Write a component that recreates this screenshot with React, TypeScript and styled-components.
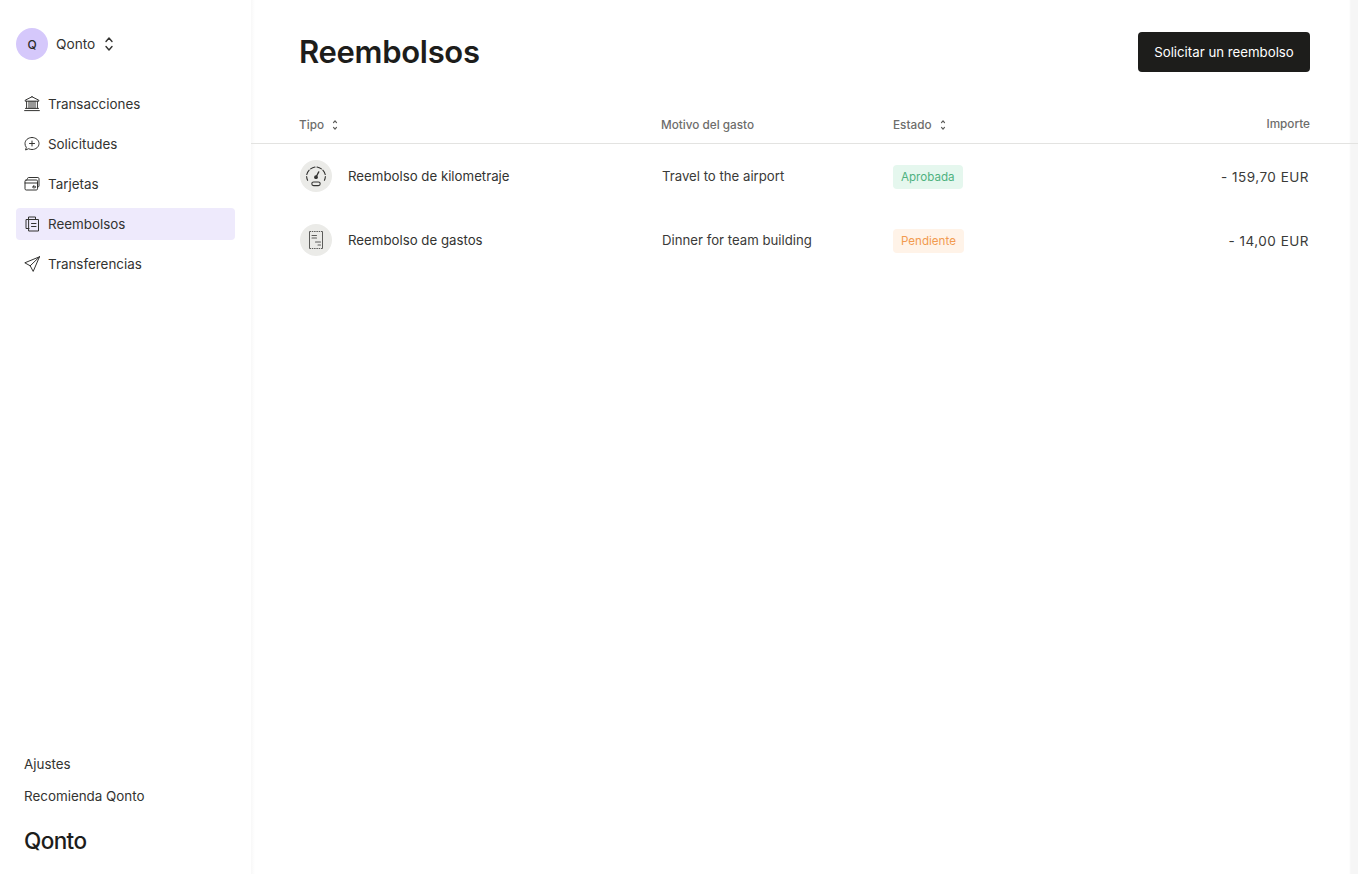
import React from 'react'
import styled, { createGlobalStyle } from 'styled-components'

const Global = createGlobalStyle`
  * { box-sizing: border-box; }
  html, body { margin: 0; height: 100%; background: #fff; }
  body { font-family: Inter, "Liberation Sans", sans-serif; color: #1d1d1b; }
  #root { height: 100%; }
`

const Page = styled.div`
  display: flex;
  height: 874px;
  overflow: hidden;
`

const Sidebar = styled.aside`
  width: 251px;
  flex: none;
  display: flex;
  flex-direction: column;
  padding: 28px 16px 19px;
`

const Org = styled.div`
  display: flex;
  align-items: center;
  height: 32px;
  margin-bottom: 28px;
`

const Avatar = styled.div`
  width: 32px;
  height: 32px;
  border-radius: 50%;
  background: #d5c8fb;
  display: flex;
  align-items: center;
  justify-content: center;
  font-size: 12px;
  font-weight: 500;
  color: #2b2b29;
  margin-right: 8px;
`

const OrgName = styled.span`
  font-size: 13.7px;
  color: #333331;
  margin-right: 6px;
`

const Nav = styled.nav`
  display: flex;
  flex-direction: column;
  gap: 8px;
`

const NavItem = styled.a<{ $active?: boolean }>`
  display: flex;
  align-items: center;
  gap: 8px;
  height: 32px;
  padding: 0 8px 1px;
  border-radius: 4px;
  font-size: 13.4px;
  color: #333331;
  background: ${(p) => (p.$active ? '#eeeafc' : 'transparent')};
`

const Footer = styled.div`
  margin-top: auto;
  padding-left: 8px;
  display: flex;
  flex-direction: column;
`

const FooterLink = styled.a`
  height: 32px;
  line-height: 31px;
  font-size: 13.4px;
  color: #333331;
`

const Logo = styled.div`
  margin-top: 14px;
  font-size: 22.500px;
  line-height: 28px;
  font-weight: 500;
  letter-spacing: -0.6px;
  color: #1d1d1b;
`

const Main = styled.main`
  flex: 1;
  min-width: 0;
  background:
    linear-gradient(to right, #f8f8f8, #ffffff 4px, #ffffff calc(100% - 9px), #f6f6f6 calc(100% - 7px));
`

const Header = styled.header`
  display: flex;
  align-items: center;
  justify-content: space-between;
  height: 104px;
  padding: 0 48px;
`

const Title = styled.h1`
  margin: 0 0 2px;
  font-size: 31px;
  font-weight: 600;
  letter-spacing: -0.3px;
  color: #1d1d1b;
`

const Button = styled.button`
  width: 172px;
  height: 40px;
  border: 0;
  border-radius: 4px;
  background: #1d1d1b;
  color: #fff;
  font: 400 13.250px Inter, "Liberation Sans", sans-serif;
`

const Row = styled.div`
  display: grid;
  grid-template-columns: 362px 232px 1fr auto;
  align-items: center;
  padding: 0 48px;
`

const HeadRow = styled(Row)`
  height: 40px;
  padding-top: 2px;
  border-bottom: 1px solid #e3e3e1;
`

const BodyRow = styled(Row)`
  height: 64px;
`

const HeadCell = styled.div`
  display: flex;
  align-items: center;
  gap: 5px;
  font-size: 11.750px;
  font-weight: 500;
  color: #6d6d6b;
`

const ImportHead = styled(HeadCell)`
  margin-top: -2px;
`

const TypeCell = styled.div`
  display: flex;
  align-items: center;
  gap: 16px;
  font-size: 13.250px;
  color: #333331;
  padding-left: 1px;
`

const IconCircle = styled.span`
  width: 32px;
  height: 32px;
  border-radius: 50%;
  background: #ebebe8;
  display: flex;
  align-items: center;
  justify-content: center;
`

const Cell = styled.div`
  font-size: 13.200px;
  color: #3a3a38;
  padding-left: 1px;
`

const BadgeCell = styled.div`
  display: flex;
  align-items: center;
  padding-top: 1px;
`

const Badge = styled.span<{ $tone: 'green' | 'orange' }>`
  height: 24px;
  line-height: 24px;
  padding: 0 8px;
  border-radius: 4px;
  font-size: 11.600px;
  background: ${(p) => (p.$tone === 'green' ? '#e5f7ee' : '#fff3e8')};
  color: ${(p) => (p.$tone === 'green' ? '#4fb27f' : '#f29b50')};
`

const Amount = styled.div`
  font-size: 13.500px;
  letter-spacing: 0.5px;
  color: #3a3a38;
  text-align: right;
  padding: 1px 1px 0 0;
`

const Glyph = styled.svg.attrs<{ $size?: number; viewBox?: string; strokeWidth?: number }>((p) => ({
  viewBox: p.viewBox ?? '0 0 16 16',
  fill: 'none',
  stroke: 'currentColor',
  strokeWidth: p.strokeWidth ?? 1,
  strokeLinecap: 'round',
  strokeLinejoin: 'round',
}))<{ $size?: number; $muted?: boolean }>`
  width: ${(p) => p.$size ?? 16}px;
  height: ${(p) => p.$size ?? 16}px;
  flex: none;
  color: ${(p) => (p.$muted ? '#5c5c5a' : '#333331')};
`

const Updown = () => (
  <Glyph strokeWidth={1.400}>
    <path d="M5 5.500 8 2l3 3.500M5 10.500 8 14l3-3.500" />
  </Glyph>
)

const SortIcon = () => (
  <Glyph $size={12} $muted strokeWidth={1.200} viewBox="0 0 12 12">
    <path d="M4.500 3.600 6 1.800l1.500 1.800M4.500 8.400 6 10.200l1.500-1.800" />
  </Glyph>
)

const BankIcon = () => (
  <Glyph>
    <path d="M8 .8 1.200 4.200v1h13.600v-1L8 .8ZM2.600 5.200v7M5 5.200v7M7 5.200v7M9 5.200v7M11 5.200v7M13.400 5.200v7M1.500 12.400h13M.6 14.600h14.800" />
  </Glyph>
)

const RequestIcon = () => (
  <Glyph>
    <path d="M8 1.500c-4 0-7 2.700-7 6.200 0 1.400.5 2.600 1.300 3.600L1.600 14l3-1.300c1 .5 2.100.8 3.400.8 3.900 0 7-2.600 7-6 0-3.400-3.100-6-7-6Z" />
    <path d="M8 5v5M5.500 7.500h5" />
  </Glyph>
)

const CardIcon = () => (
  <Glyph>
    <path d="M3.500 3V2.600c0-.6.5-1.100 1.100-1.100h9.300c.6 0 1.100.5 1.100 1.100v7.300c0 .6-.5 1.100-1.100 1.100h-.4" />
    <rect x="1" y="4" width="12.500" height="10" rx="1.200" />
    <path d="M1 7h12.500" />
    <rect x="8.600" y="10.200" width="3" height="1.600" rx=".8" />
  </Glyph>
)

const ReceiptIcon = () => (
  <Glyph>
    <path d="M4.500 3.500V1h7v2.500M5 12.500H2v-9h2.500" />
    <path d="M5 3.500h9.500v11.500H5z" />
    <path d="M7.500 7.500h4.500M7.500 10.500h4.500" />
  </Glyph>
)

const SendIcon = () => (
  <Glyph>
    <path d="M15.500.8.800 6.800l5.400 3 3 5.600 6.300-14.600ZM6.200 9.800 15.500.8" />
  </Glyph>
)

const GaugeIcon = () => (
  <Glyph $size={24} viewBox="0 0 20 20" strokeWidth={0.900}>
    <path d="M3 13.600a8 8 0 0 1-.8-3.100M2.300 8.800a8 8 0 0 1 2-3.700M5.500 4.100a8 8 0 0 1 3.700-1.600M10.800 2.500a8 8 0 0 1 3.700 1.600M15.700 5.100a8 8 0 0 1 2 3.700M17.800 10.500a8 8 0 0 1-.8 3.100" />
    <path d="m12.300 6.600-1.900 3.600" strokeWidth={1.100} />
    <circle cx="10" cy="11" r="1.100" fill="currentColor" />
    <rect x="6.500" y="15" width="7" height="3" rx="1.500" />
  </Glyph>
)

const ExpenseIcon = () => (
  <Glyph $size={20} $muted viewBox="0 0 20 20">
    <path d="M3.500 1.500v17M16.500 1.500v17" strokeLinecap="butt" />
    <path d="M3.500 1.500h13M3.500 18.500h13" strokeLinecap="butt" strokeDasharray="1.500 .8" />
    <path d="M6 5.500h4.500M6 8h4.500M9.500 12h5M12 15h2.500" strokeWidth={1.100} />
  </Glyph>
)

const App = () => (
  <Page>
    <Global />
    <Sidebar>
      <Org>
        <Avatar>Q</Avatar>
        <OrgName>Qonto</OrgName>
        <Updown />
      </Org>
      <Nav>
        <NavItem><BankIcon />Transacciones</NavItem>
        <NavItem><RequestIcon />Solicitudes</NavItem>
        <NavItem><CardIcon />Tarjetas</NavItem>
        <NavItem $active><ReceiptIcon />Reembolsos</NavItem>
        <NavItem><SendIcon />Transferencias</NavItem>
      </Nav>
      <Footer>
        <FooterLink>Ajustes</FooterLink>
        <FooterLink>Recomienda Qonto</FooterLink>
        <Logo>Qonto</Logo>
      </Footer>
    </Sidebar>
    <Main>
      <Header>
        <Title>Reembolsos</Title>
        <Button>Solicitar un reembolso</Button>
      </Header>
      <HeadRow>
        <HeadCell>Tipo <SortIcon /></HeadCell>
        <HeadCell>Motivo del gasto</HeadCell>
        <HeadCell>Estado <SortIcon /></HeadCell>
        <ImportHead>Importe</ImportHead>
      </HeadRow>
      <BodyRow>
        <TypeCell><IconCircle><GaugeIcon /></IconCircle>Reembolso de kilometraje</TypeCell>
        <Cell>Travel to the airport</Cell>
        <BadgeCell><Badge $tone="green">Aprobada</Badge></BadgeCell>
        <Amount>- 159,70 EUR</Amount>
      </BodyRow>
      <BodyRow>
        <TypeCell><IconCircle><ExpenseIcon /></IconCircle>Reembolso de gastos</TypeCell>
        <Cell>Dinner for team building</Cell>
        <BadgeCell><Badge $tone="orange">Pendiente</Badge></BadgeCell>
        <Amount>- 14,00 EUR</Amount>
      </BodyRow>
    </Main>
  </Page>
)

export default App
